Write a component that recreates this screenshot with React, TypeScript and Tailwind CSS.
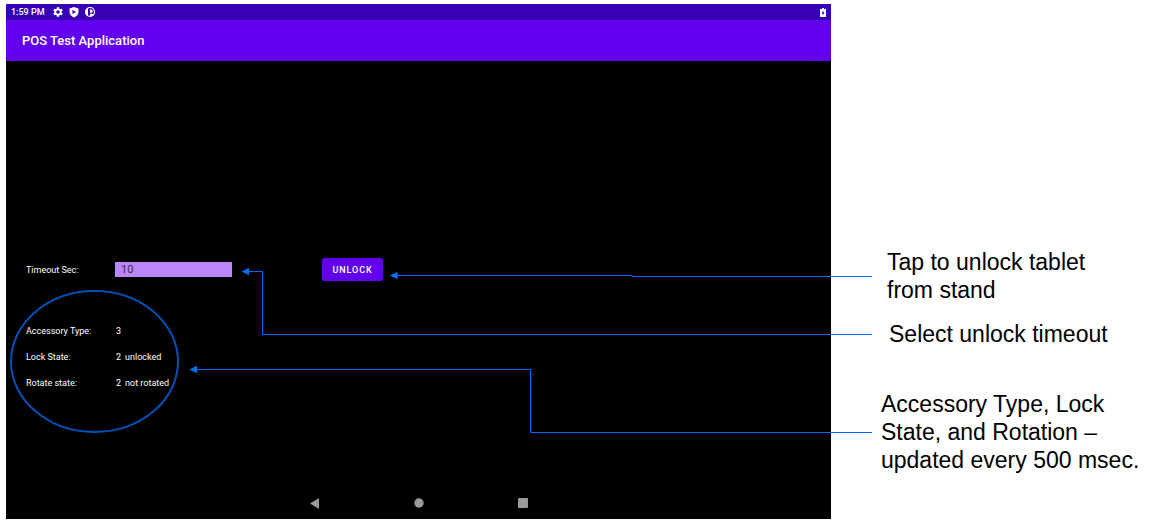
import { useState } from "react";

function SettingsIcon() {
  return (
    <svg viewBox="0 0 24 24" className="size-3" fill="white" aria-hidden="true">
      <path d="M19.14 12.94c.04-.3.06-.61.06-.94s-.02-.64-.07-.94l2.03-1.58a.5.5 0 0 0 .12-.61l-1.92-3.32a.49.49 0 0 0-.59-.22l-2.39.96a7 7 0 0 0-1.62-.94l-.36-2.54a.48.48 0 0 0-.48-.41h-3.84a.47.47 0 0 0-.47.41l-.36 2.54c-.59.24-1.13.57-1.62.94l-2.39-.96a.48.48 0 0 0-.59.22L2.74 8.87a.47.47 0 0 0 .12.61l2.03 1.58a6 6 0 0 0-.02 1.88l-2.03 1.58a.5.5 0 0 0-.12.61l1.92 3.32c.12.22.37.29.59.22l2.39-.96c.5.38 1.03.7 1.62.94l.36 2.54c.05.24.24.41.48.41h3.84c.24 0 .44-.17.47-.41l.36-2.54a6.7 6.7 0 0 0 1.62-.94l2.39.96c.22.08.47 0 .59-.22l1.92-3.32a.47.47 0 0 0-.12-.61zM12 15.6A3.6 3.6 0 1 1 12 8.4a3.6 3.6 0 0 1 0 7.2z" />
    </svg>
  );
}

function ShieldIcon() {
  return (
    <svg viewBox="0 0 24 24" className="size-3" aria-hidden="true">
      <path fill="white" d="M12 2 3 5v7c0 5 4 8.800 9 11 5-2.200 9-6 9-11V5z" />
      <path fill="#3700b3" d="M9 7.500v8.500l7-4.250z" />
    </svg>
  );
}

function ParkingIcon() {
  return (
    <svg viewBox="0 0 24 24" className="size-3" aria-hidden="true">
      <circle cx="12" cy="12" r="9" fill="none" stroke="white" strokeWidth="2.400" />
      <path fill="white" d="M12 7h2.500a3.200 3.200 0 0 1 0 6.400H12z" />
      <path fill="white" d="M3 12a9 9 0 0 1 5-8v16a9 9 0 0 1-5-8z" />
      <path fill="white" d="M12 15.500h5l3 1a10 10 0 0 1-8 5z" />
    </svg>
  );
}

function BatteryIcon() {
  return (
    <svg viewBox="0 0 12 18" className="h-[9px] w-1.5" aria-hidden="true">
      <path fill="white" d="M4 0h4v2h4v16H0V2h4z" />
      <path fill="#3700b3" d="M7 5 3 11h2.500v4L9 9H7z" />
    </svg>
  );
}

const states = [
  { label: "Accessory Type:", value: "3", note: "" },
  { label: "Lock State:", value: "2", note: "unlocked" },
  { label: "Rotate state:", value: "2", note: "not rotated" },
];

function Tablet() {
  const [timeout, setTimeoutSec] = useState("10");
  return (
    <section className="flex min-w-0 flex-1 flex-col bg-black font-['Roboto',sans-serif] text-white">
      <div className="flex h-4 items-center bg-[#3700b3] px-[5px] text-[9px] leading-4 font-medium">
        <span className="w-[41px] whitespace-nowrap">1:59 PM</span>
        <div className="flex gap-1">
          <SettingsIcon />
          <ShieldIcon />
          <ParkingIcon />
        </div>
        <div className="ml-auto">
          <BatteryIcon />
        </div>
      </div>
      <header className="flex h-[41px] items-center bg-[#6200ee] px-4">
        <h1 className="text-[13px] font-medium">POS Test Application</h1>
      </header>

      <div className="flex flex-1 flex-col gap-[37px] px-5 pt-[197px] text-[9px] leading-[14px]">
        <div className="flex h-[23px] items-center">
          <label htmlFor="timeout" className="w-[89px]">
            Timeout Sec:
          </label>
          <input
            id="timeout"
            value={timeout}
            onChange={(e) => setTimeoutSec(e.target.value)}
            className="h-[15px] w-[117px] bg-[#bb86fc] px-1.5 text-[11px] text-[#3a2355] outline-none"
          />
          <button
            type="button"
            className="ml-[90px] h-[23px] w-[61px] rounded-xs bg-[#6200ee] text-[9px] font-medium tracking-widest"
          >
            UNLOCK
          </button>
        </div>
        <dl>
          {states.map((s) => (
            <div key={s.label} className="flex h-[26px] items-center">
              <dt className="w-[90px]">{s.label}</dt>
              <dd className="flex gap-1">
                <span>{s.value}</span>
                <span>{s.note}</span>
              </dd>
            </div>
          ))}
        </dl>
      </div>

      <nav className="flex h-8 items-center justify-center gap-[94px]">
        <button type="button" aria-label="Back">
          <svg viewBox="0 0 10 11" className="h-[11px] w-2.5" fill="#9a9a9a">
            <path d="M9 0v11L0 5.500z" />
          </svg>
        </button>
        <button type="button" aria-label="Home">
          <svg viewBox="0 0 10 10" className="size-2.5" fill="#9a9a9a">
            <circle cx="5" cy="5" r="4.700" />
          </svg>
        </button>
        <button type="button" aria-label="Recent apps">
          <svg viewBox="0 0 10 10" className="size-2.5" fill="#9a9a9a">
            <rect width="10" height="10" rx="1" />
          </svg>
        </button>
      </nav>
    </section>
  );
}

function Callouts() {
  return (
    <svg
      width="872"
      height="523"
      viewBox="0 0 872 523"
      className="pointer-events-none absolute top-0 left-0"
      aria-hidden="true"
    >
      <ellipse cx="94.500" cy="361.500" rx="83.500" ry="70.500" fill="none" stroke="#0050b8" strokeWidth="2" />
      <g fill="none" stroke="#0066ff" strokeWidth="1">
        <path d="M872 276.500H632.500V275.500H397" />
        <path d="M872 334.500H262.500V271.500H248" />
        <path d="M872 432.500H530.500V369.500H196" />
      </g>
      <g fill="#0070ff">
        <path d="M390 275.500l7.500-3.700v7.400z" />
        <path d="M241.500 271.500l7.500-3.700v7.400z" />
        <path d="M189.500 369.500l7.500-3.700v7.400z" />
      </g>
    </svg>
  );
}

export default function App() {
  return (
    <main className="relative flex min-h-screen bg-white py-1 pl-1.5">
      <Tablet />
      <aside className="flex w-[319px] flex-col pt-[244px] pl-[50px] font-['Liberation_Sans',Arial,sans-serif] text-[23px] leading-7 text-black">
        <p className="pl-1.5">
          Tap to unlock tablet
          <br />
          from stand
        </p>
        <p className="mt-4 pl-2">Select unlock timeout</p>
        <p className="mt-[42px]">
          Accessory Type, Lock
          <br />
          State, and Rotation –
          <br />
          updated every 500 msec.
        </p>
      </aside>
      <Callouts />
    </main>
  );
}
